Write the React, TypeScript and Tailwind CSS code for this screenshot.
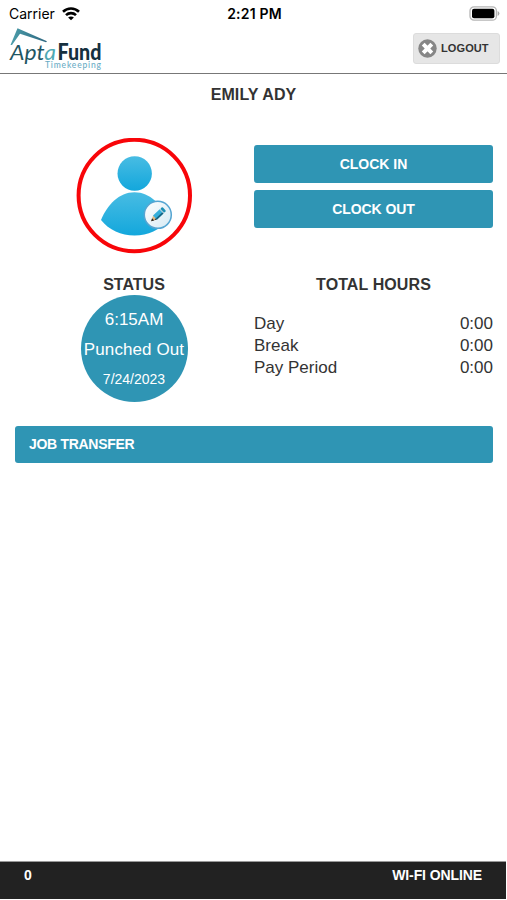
import React from 'react';

const hours = [
  { label: 'Day', value: '0:00' },
  { label: 'Break', value: '0:00' },
  { label: 'Pay Period', value: '0:00' }
];

const StatusBar = () => (
  <div className="grid h-[27px] grid-cols-3 items-center pl-[9px] pr-[7px] font-['Inter','Roboto',sans-serif] text-black">
    <div className="flex items-center gap-[6px] text-[14px]">
      <span className="w-[47px] whitespace-nowrap">Carrier</span>
      <svg width="18" height="14" viewBox="0 0 18 14" fill="none" stroke="#000" strokeWidth="2.6">
        <path d="M1 4.7C5.5.4 12.5.4 17 4.7" />
        <path d="M4 8.1c2.8-2.7 7.2-2.7 10 0" />
        <path d="M9 13.2 6.1 10.5c1.6-1.5 4.2-1.5 5.8 0z" fill="#000" stroke="none" />
      </svg>
    </div>
    <span className="text-center text-[14px] font-semibold tracking-[0.2px] whitespace-nowrap">2:21 PM</span>
    <svg className="justify-self-end" width="31" height="15" viewBox="0 0 31 15">
      <rect x="1" y=".8" width="26.4" height="13.4" rx="4" fill="#fff" stroke="#b5b5b5" strokeWidth="1.3" />
      <rect x="3" y="2.8" width="22.4" height="9.4" rx="2" fill="#000" />
      <path d="M28.6 5v5q1.8-.8 1.8-2.5T28.6 5z" fill="#aaa" />
    </svg>
  </div>
);

const Logo = () => (
  <svg className="overflow-visible" width="94" height="45" viewBox="0 0 94 45">
    <defs>
      <linearGradient id="roof" x1="0" x2="1">
        <stop offset="0" stopColor="#4c9eaa" />
        <stop offset="1" stopColor="#2d6680" />
      </linearGradient>
    </defs>
    <path d="M1.5 18 8.5 1.2 38 14.3l-1 .9L11 6.8 3 18z" fill="url(#roof)" />
    <text x="1" y="33" fontSize="21" fontStyle="italic" fontFamily="Lato, sans-serif" fill="#1f5663" textLength="46" lengthAdjust="spacingAndGlyphs">Apt<tspan fill="#4eaab5">a</tspan></text>
    <text x="48.5" y="33" fontSize="23.5" fontWeight="900" fontFamily="Lato, sans-serif" fill="#15303f" textLength="44" lengthAdjust="spacingAndGlyphs">Fund</text>
    <text x="36" y="41" fontSize="8.5" fontWeight="500" fontFamily="Lato, sans-serif" fill="#6aacc5" textLength="56">Timekeeping</text>
  </svg>
);

const Avatar = () => (
  <svg width="116" height="116" viewBox="0 0 116 116">
    <defs>
      <linearGradient id="person" x1="0" y1="0" x2="0" y2="1">
        <stop offset="0" stopColor="#48bce3" />
        <stop offset="1" stopColor="#13a7dc" />
      </linearGradient>
      <linearGradient id="badge" x1="0" y1="0" x2="1" y2="1">
        <stop offset="0" stopColor="#fff" />
        <stop offset="1" stopColor="#d5e9f3" />
      </linearGradient>
    </defs>
    <circle cx="58.3" cy="57.5" r="55.7" fill="#fff" stroke="#f80509" strokeWidth="4" />
    <circle cx="58.7" cy="35.5" r="17.2" fill="url(#person)" />
    <path d="M25 82C31 67 43 54.2 58.5 54.2S86 67 92 82C84 92 72 97.5 58.5 97.5S33 92 25 82z" fill="url(#person)" />
    <circle cx="81.8" cy="76.8" r="13.5" fill="url(#badge)" stroke="#55a5d2" strokeWidth="1.5" />
    <g transform="translate(81.7 77) rotate(-43)">
      <path d="M-9 0-3.6-2.8v5.6z" fill="#dfb880" />
      <path d="M-9 0-6.3-1.5v3z" fill="#222" />
      <path d="M-6 1.5-3.6 2.8V1z" fill="#333" />
      <rect x="-3.8" y="-2.8" width="9.1" height="5.6" fill="#35aed9" />
      <path d="M-3.8 1.2h9.1v1.6h-9.1z" fill="#17627f" />
      <path d="M5.3-2.8h1.2v5.6H5.3z" fill="#b5cbd5" />
      <rect x="6.3" y="-2.8" width="2.6" height="5.6" rx="1" fill="#1b8fb5" />
    </g>
  </svg>
);

const App = () => {
  return (
    <div className="flex h-[900px] w-[507px] flex-col bg-white font-['Liberation_Sans',Arial,sans-serif] text-[#333]">
      <StatusBar />
      <header className="flex h-[47px] items-start justify-between border-b border-[#777] pl-[9px] pr-[7px]">
        <Logo />
        <button className="mt-[6px] flex h-[31px] w-[87px] items-center gap-[4px] rounded-[3px] border border-[#dcdcdc] bg-[#e6e6e6] pl-[4px] text-[11px] font-bold tracking-[0.1px]">
          <svg width="19" height="19" viewBox="0 0 19 19">
            <circle cx="9.5" cy="9.5" r="9.2" fill="#868686" />
            <path d="m5.2 5.2 8.6 8.6m0-8.6-8.6 8.6" stroke="#fff" strokeWidth="4" />
          </svg>
          LOGOUT
        </button>
      </header>

      <main className="flex-1 px-[14px]">
        <h1 className="mt-[11px] text-center text-[16px] leading-[20px] font-bold tracking-[0.1px]">EMILY ADY</h1>

        <section className="mt-[33px] flex">
          <div className="flex w-[240px] justify-center">
            <Avatar />
          </div>
          <div className="mt-[7px] flex w-[239px] flex-col gap-[7px] text-[14px] font-bold text-white">
            <button className="h-[38px] rounded-[3px] bg-[#2f95b4]">CLOCK IN</button>
            <button className="h-[38px] rounded-[3px] bg-[#2f95b4] tracking-[-0.1px]">CLOCK OUT</button>
          </div>
        </section>

        <section className="mt-[21px] flex">
          <div className="flex w-[240px] flex-col items-center">
            <h2 className="text-[16px] leading-[20px] font-bold">STATUS</h2>
            <div className="flex size-[107px] flex-col items-center rounded-full bg-[#2f95b4] pt-[10px] text-[17px] leading-[30px] whitespace-nowrap text-white">
              <span>6:15AM</span>
              <span className="tracking-[0.1px]">Punched Out</span>
              <span className="-mt-px text-[14px]">7/24/2023</span>
            </div>
          </div>
          <div className="w-[239px]">
            <h2 className="text-center text-[16px] leading-[20px] font-bold tracking-[0.1px]">TOTAL HOURS</h2>
            <dl className="mt-[18px] text-[17px] leading-[22px]">
              {hours.map((row) => (
                <div key={row.label} className="flex justify-between">
                  <dt>{row.label}</dt>
                  <dd>{row.value}</dd>
                </div>
              ))}
            </dl>
          </div>
        </section>

        <button className="mt-[24px] ml-px flex h-[37px] w-[478px] items-center rounded-[3px] bg-[#2f95b4] px-[14px] text-[14px] font-bold tracking-[-0.3px] text-white">
          JOB TRANSFER
        </button>
      </main>

      <footer className="mr-px mb-px flex h-[38px] items-start justify-between border-t border-[#999] bg-[#222] pt-[3px] pr-[24px] pl-[24px] text-[14px] leading-[20px] font-bold text-white">
        <span>0</span>
        <span className="tracking-[-0.1px]">WI-FI ONLINE</span>
      </footer>
    </div>
  );
};

export default App;
